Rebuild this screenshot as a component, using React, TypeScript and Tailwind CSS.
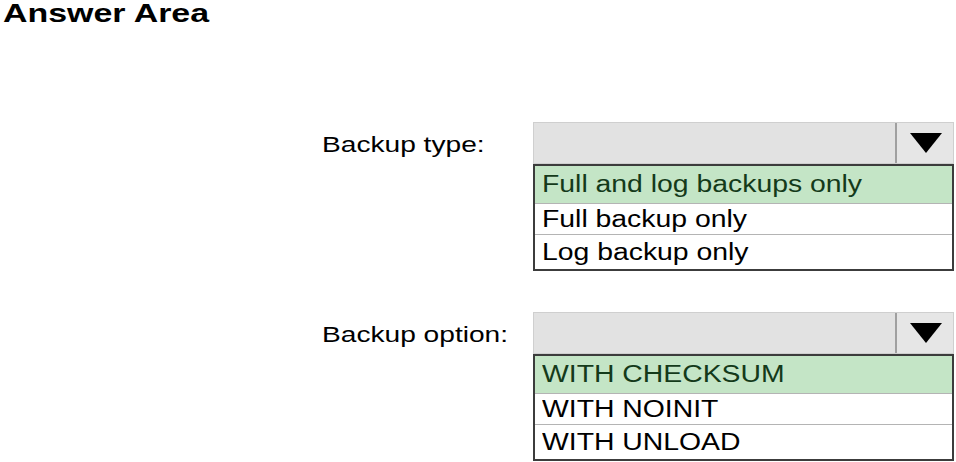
import React from "react";

type Group = {
  label: string;
  options: string[];
};

const groups: Group[] = [
  {
    label: "Backup type:",
    options: ["Full and log backups only", "Full backup only", "Log backup only"],
  },
  {
    label: "Backup option:",
    options: ["WITH CHECKSUM", "WITH NOINIT", "WITH UNLOAD"],
  },
];

const rowHeights = ["h-[37px]", "h-[31px]", "h-[35px]"];

const Arrow = () => (
  <svg width="32" height="20" viewBox="0 0 32 20">
    <polygon points="0,0 32,0 16,20" fill="#000" />
  </svg>
);

const DropGroup: React.FC<{ group: Group }> = ({ group }) => (
  <div className="flex">
    <div className="w-[211px] h-[42px] flex items-center pt-[5px]">
      <span className="inline-block origin-left scale-x-[1.25] text-[22.5px] leading-none text-black">
        {group.label}
      </span>
    </div>
    <div className="w-[421px]">
      <div className="h-[42px] flex bg-[#e2e2e2] border border-[#cfcfcf]">
        <div className="flex-1" />
        <div className="w-[58px] border-l-2 border-[#a0a0a0] bg-[#e6e6e6] flex items-center justify-center pl-[2px]">
          <Arrow />
        </div>
      </div>
      <div className="border-2 border-[#3c3c3c] bg-white">
        {group.options.map((opt, i) => (
          <div
            key={opt}
            className={`${rowHeights[i]} pl-[7px] flex items-center ${
              i > 0 ? "border-t border-[#b4b4b4]" : ""
            } ${i === 0 ? "bg-[#c4e5c6] text-[#143a1a]" : "text-black"}`}
          >
            <span className="inline-block origin-left scale-x-[1.233] text-[23px] leading-none">
              {opt}
            </span>
          </div>
        ))}
      </div>
    </div>
  </div>
);

export default function App() {
  return (
    <div className="w-[956px] h-[462px] bg-white overflow-hidden font-['Liberation_Sans',Arial,sans-serif]">
      <h1 className="pl-[3px] pt-[1px] h-[26px] text-[25.5px] font-bold leading-none text-black">
        <span className="inline-block origin-left scale-x-[1.33]">Answer Area</span>
      </h1>
      <div className="pl-[322px] pt-[96px] flex flex-col gap-[41px]">
        {groups.map((g) => (
          <DropGroup key={g.label} group={g} />
        ))}
      </div>
    </div>
  );
}
